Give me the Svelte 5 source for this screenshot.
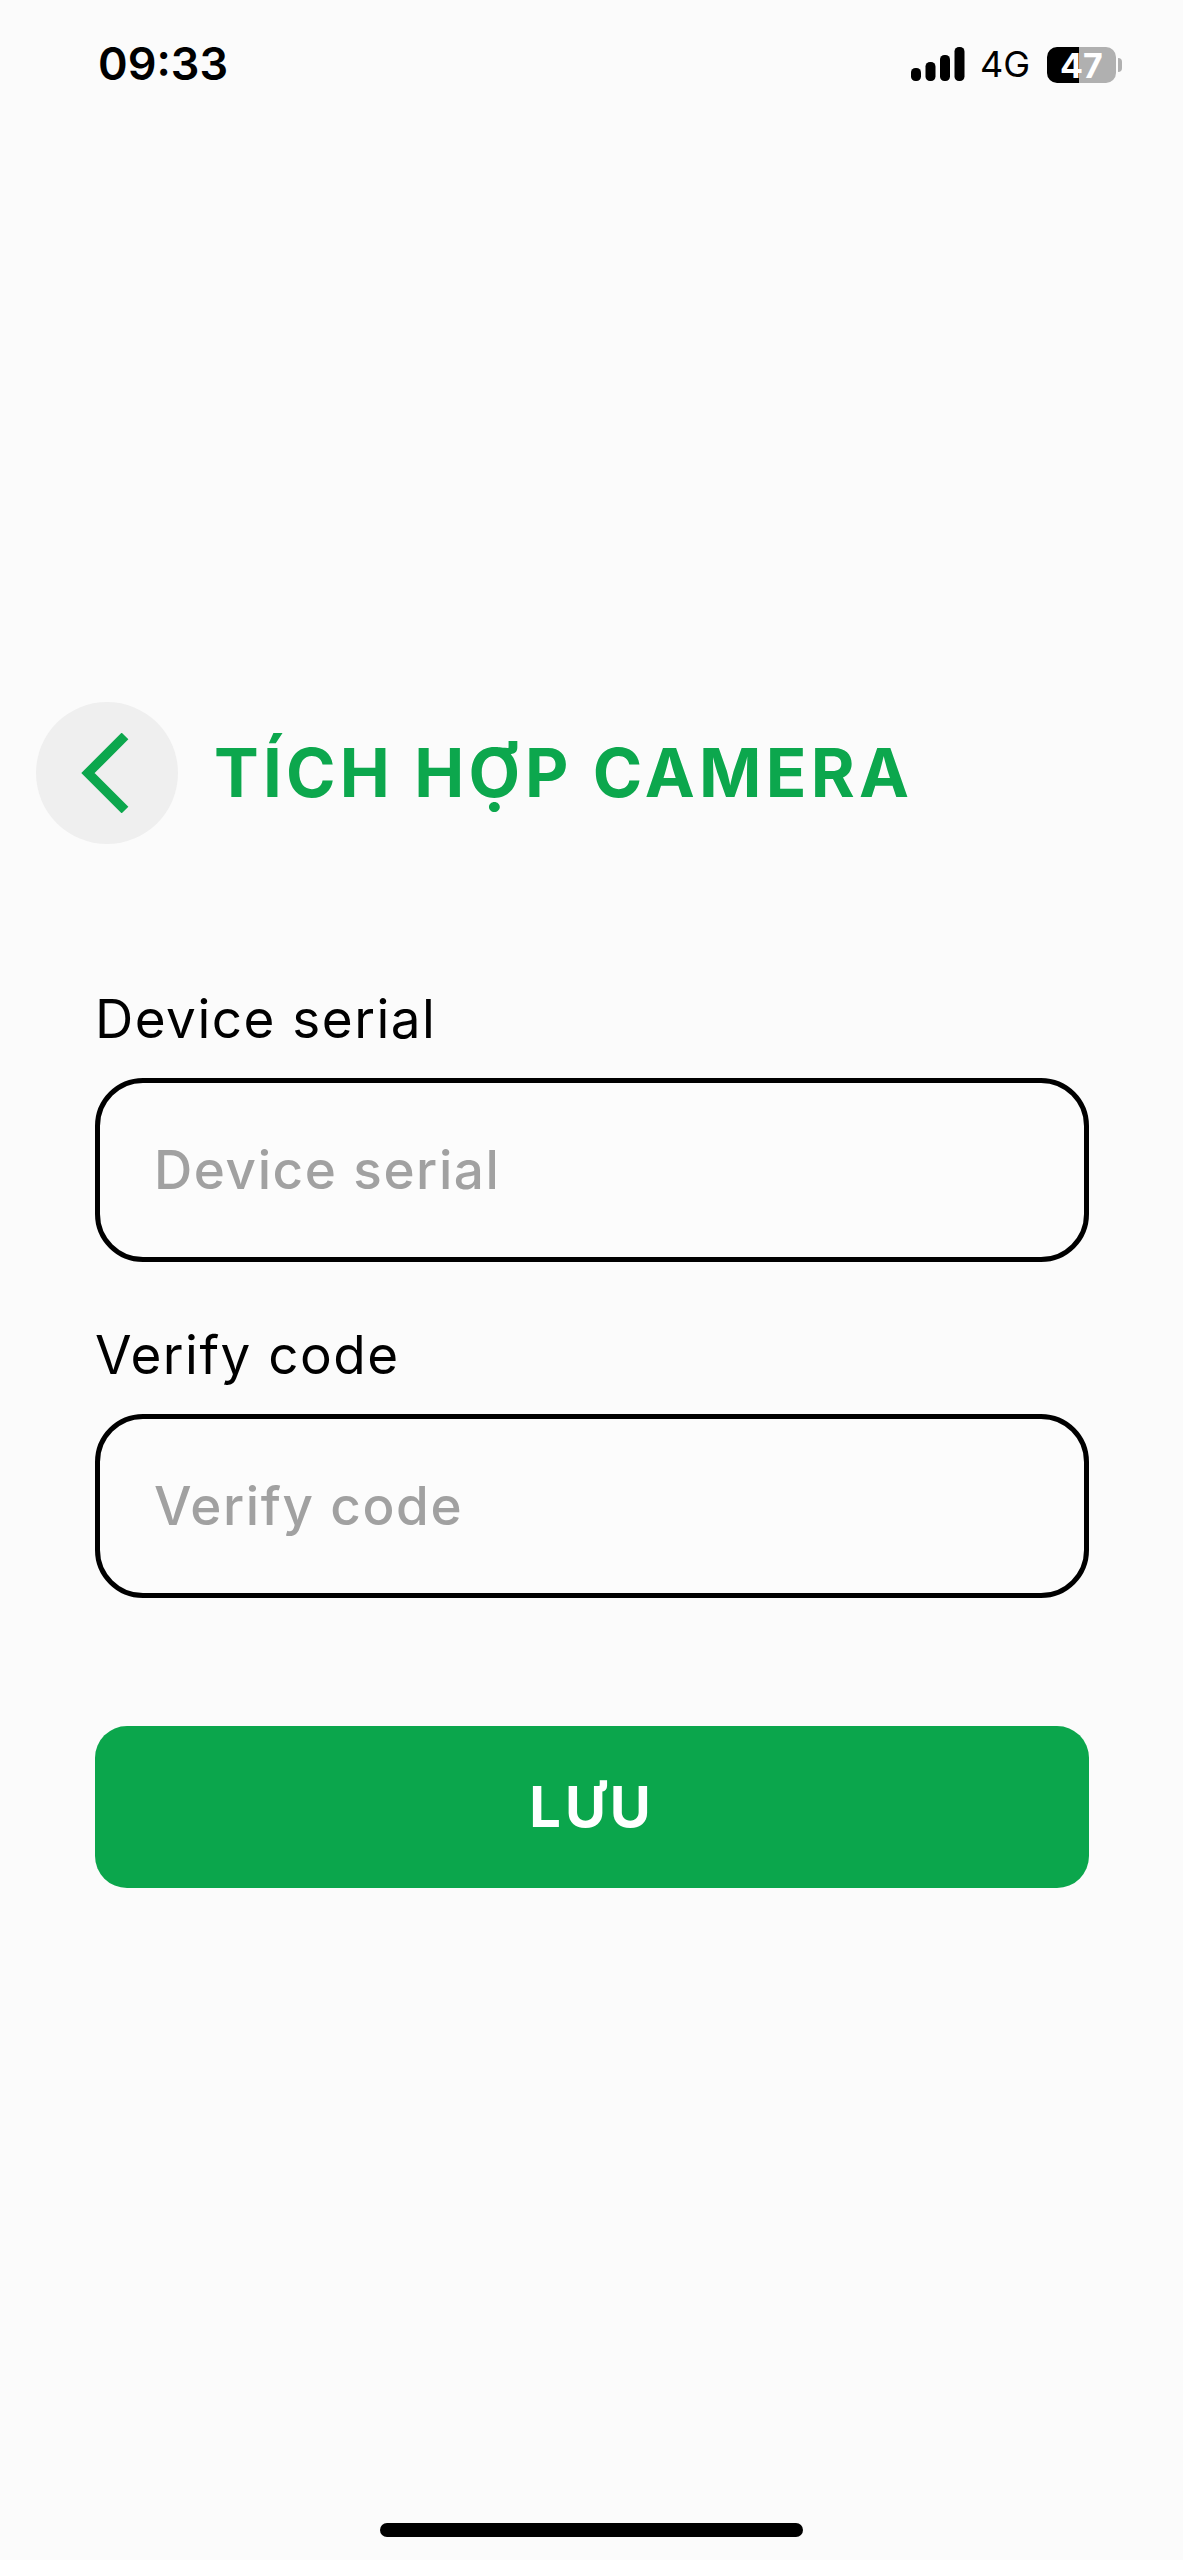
<script>
  const fields = ['Device serial', 'Verify code'];
</script>

<div class="page">
  <header class="status">
    <span class="time">09:33</span>
    <div class="indicators">
      <svg class="signal" width="54" height="34" viewBox="0 0 54 34" aria-hidden="true">
        <rect x="0" y="21" width="10" height="13" rx="4.5" />
        <rect x="14.5" y="15" width="10" height="19" rx="4.5" />
        <rect x="29" y="8" width="10" height="26" rx="4.5" />
        <rect x="43.5" y="0" width="10" height="34" rx="4.5" />
      </svg>
      <span class="network">4G</span>
      <div class="battery">
        <div class="cell"><span>47</span></div>
        <div class="nub"></div>
      </div>
    </div>
  </header>

  <div class="title-row">
    <button class="back" aria-label="Back">
      <svg width="50" height="80" viewBox="0 0 50 80" aria-hidden="true">
        <path d="M45 3 L8 40 L45 77" />
      </svg>
    </button>
    <h1>TÍCH HỢP CAMERA</h1>
  </div>

  <form class="form">
    {#each fields as field}
      <div class="field">
        <span class="label">{field}</span>
        <input placeholder={field} aria-label={field} />
      </div>
    {/each}
    <button type="button" class="save">LƯU</button>
  </form>

  <div class="home"></div>
</div>

<style>
  :global(body) {
    margin: 0;
    background: #fbfbfb;
  }
  .page {
    box-sizing: border-box;
    height: 2560px;
    background: #fbfbfb;
    display: flex;
    flex-direction: column;
    font-family: Inter, "Liberation Sans", sans-serif;
    color: #000;
    overflow: hidden;
  }
  .status {
    display: flex;
    justify-content: space-between;
    align-items: center;
    height: 36px;
    margin-top: 46px;
    padding: 0 61px 0 98px;
  }
  .time {
    font-size: 45px;
    font-weight: 600;
    line-height: 36px;
  }
  .indicators {
    display: flex;
    align-items: center;
  }
  .signal {
    fill: #000;
    margin-right: 15px;
  }
  .network {
    font-size: 36px;
    font-weight: 400;
    line-height: 36px;
    margin-right: 17px;
  }
  .battery {
    display: flex;
    align-items: center;
    gap: 2px;
    transform: translateY(1px);
  }
  .cell {
    width: 69px;
    height: 36px;
    border-radius: 10px;
    background: linear-gradient(90deg, #000 0 32px, #b0b0b0 32px);
    display: flex;
    align-items: center;
    justify-content: center;
    color: #fff;
    font-size: 34px;
    font-weight: 700;
  }
  .nub {
    width: 4px;
    height: 14px;
    border-radius: 0 4px 4px 0;
    background: #b0b0b0;
  }
  .title-row {
    display: flex;
    align-items: center;
    gap: 36px;
    margin-top: 620px;
    padding-left: 36px;
  }
  .back {
    width: 142px;
    height: 142px;
    border: 0;
    padding: 0;
    border-radius: 50%;
    background: #efefef;
    display: flex;
    align-items: center;
    justify-content: center;
  }
  .back svg {
    fill: none;
    stroke: #0ca74d;
    stroke-width: 9.5;
    margin-right: 4px;
  }
  h1 {
    margin: 0;
    font-size: 67px;
    font-weight: 700;
    line-height: 80px;
    color: #0ca74d;
    white-space: nowrap;
    letter-spacing: 4.25px;
  }
  .form {
    display: flex;
    flex-direction: column;
    margin-top: 143px;
    padding: 0 94px 0 95px;
  }
  .field {
    display: flex;
    flex-direction: column;
    margin-bottom: 61px;
  }
  .label {
    font-size: 53px;
    line-height: 64px;
    margin-bottom: 27px;
    letter-spacing: 1.5px;
  }
  input {
    box-sizing: border-box;
    width: 100%;
    height: 184px;
    border: 5px solid #000;
    border-radius: 48px;
    background: #fcfcfc;
    padding: 0 0 0 54px;
    font: 500 53px Inter, "Liberation Sans", sans-serif;
    letter-spacing: 1.6px;
    outline: none;
  }
  input::placeholder {
    color: #a1a1a1;
    opacity: 1;
  }
  .save {
    margin-top: 67px;
    height: 162px;
    border: 0;
    border-radius: 32px;
    background: #0ba64c;
    color: #fff;
    font: 700 56px Inter, "Liberation Sans", sans-serif;
    letter-spacing: 4px;
  }
  .home {
    align-self: center;
    width: 423px;
    height: 14px;
    border-radius: 7px;
    background: #000;
    margin-top: auto;
    margin-bottom: 23px;
  }
</style>
